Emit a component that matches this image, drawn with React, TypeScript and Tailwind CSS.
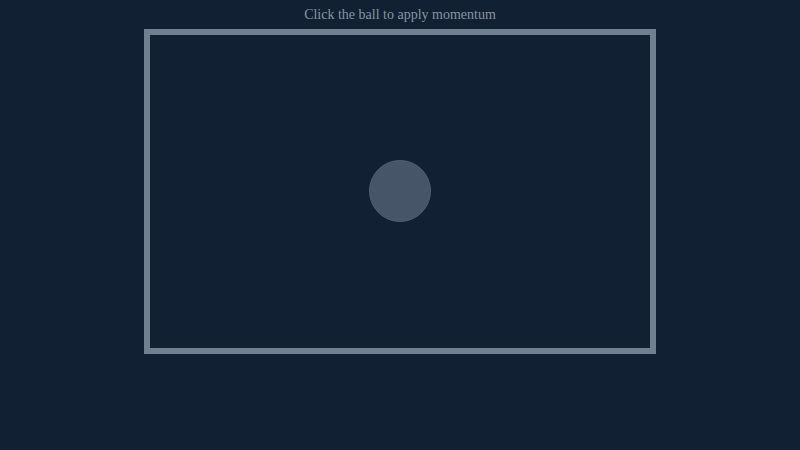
export default function App() {
  return (
    <div className="flex h-[450px] w-[800px] flex-col items-center bg-[#112032] font-['Liberation_Serif',serif]">
      <p className="mt-[6px] text-[14px] leading-[18px] text-[#8896a5]">
        Click the ball to apply momentum
      </p>
      <div className="mt-[5px] flex h-[325px] w-[512px] items-center justify-center border-[6px] border-[#708090]">
        <button
          type="button"
          aria-label="ball"
          className="mb-[1px] h-[62px] w-[62px] rounded-full border border-[#506070] bg-[#475569]"
        />
      </div>
    </div>
  );
}
